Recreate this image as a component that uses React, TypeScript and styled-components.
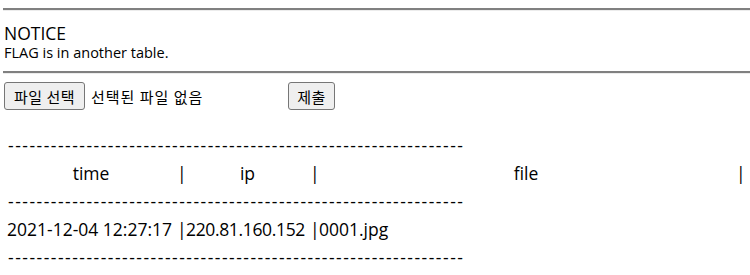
import { Fragment } from "react";
import styled, { createGlobalStyle } from "styled-components";

const GlobalStyle = createGlobalStyle`
  body {
    margin: 0;
    background: #ffffff;
    color: #000000;
    font-family: "Open Sans", "Noto Sans CJK KR", sans-serif;
  }
`;

const Page = styled.div`
  padding: 8px 0 0 3px;
`;

const Rule = styled.hr<{ $top: number }>`
  margin: ${(p) => p.$top}px 0 0 0;
  height: 0;
  border: 0;
  border-top: 2px solid #808080;
  border-bottom: 1px solid #ececec;
`;

const Notice = styled.div`
  padding: 12px 0 0 1px;
`;

const NoticeTitle = styled.div`
  font-size: 17.5px;
  line-height: 21px;
`;

const NoticeText = styled.div`
  font-size: 14.5px;
  line-height: 17px;
`;

const UploadForm = styled.form`
  display: flex;
  align-items: center;
  margin-top: 8px;
  padding-left: 1px;
`;

const FilePicker = styled.label`
  display: flex;
  align-items: center;
  gap: 6px;
  width: 280px;
  font-family: "Noto Sans CJK KR", sans-serif;
  font-size: 15px;
  letter-spacing: 1px;
`;

const Button = styled.button<{ $width: number }>`
  width: ${(p) => p.$width}px;
  height: 28px;
  padding: 0;
  background: #efefef;
  border: 1px solid #767676;
  border-radius: 3px;
  font-family: "Noto Sans CJK KR", sans-serif;
  font-size: 15px;
  letter-spacing: 0.5px;
  color: #000;
`;

const SubmitButton = styled(Button)`
  margin-left: 4px;
`;

const Log = styled.div`
  margin-top: 21px;
  display: grid;
  grid-template-columns: 172px 8px 125px 6px 420px 6px;
  padding-left: 2px;
  font-size: 17.5px;
`;

const Dashes = styled.div`
  grid-column: 1 / -1;
  height: 28px;
  line-height: 28px;
  padding-left: 3px;
  letter-spacing: 1.5px;
  white-space: nowrap;
`;

const Head = styled.div`
  height: 28px;
  line-height: 28px;
  text-align: center;
`;

const Cell = styled.div<{ $pad: number; $tight?: boolean }>`
  height: 28px;
  line-height: 28px;
  padding-left: ${(p) => p.$pad}px;
  letter-spacing: ${(p) => (p.$tight ? "-0.35px" : "0")};
  white-space: nowrap;
`;

const Sep = styled.div`
  height: 28px;
  line-height: 28px;
  text-align: center;
`;

const dashes = "-".repeat(64);

const logs = [{ time: "2021-12-04 12:27:17", ip: "220.81.160.152", file: "0001.jpg" }];

export default function App() {
  return (
    <Page>
      <GlobalStyle />
      <Rule $top={0} />
      <Notice>
        <NoticeTitle>NOTICE</NoticeTitle>
        <NoticeText>FLAG is in another table.</NoticeText>
      </Notice>
      <Rule $top={10} />
      <UploadForm onSubmit={(e) => e.preventDefault()}>
        <FilePicker>
          <Button type="button" $width={81}>
            파일 선택
          </Button>
          <span>선택된 파일 없음</span>
        </FilePicker>
        <SubmitButton type="submit" $width={47}>
          제출
        </SubmitButton>
      </UploadForm>
      <Log>
        <Dashes>{dashes}</Dashes>
        <Head>time</Head>
        <Sep>|</Sep>
        <Head>ip</Head>
        <Sep>|</Sep>
        <Head>file</Head>
        <Sep>|</Sep>
        <Dashes>{dashes}</Dashes>
        {logs.map((row) => (
          <Fragment key={row.time}>
            <Cell $pad={2}>{row.time}</Cell>
            <Sep>|</Sep>
            <Cell $pad={1} $tight>
              {row.ip}
            </Cell>
            <Sep>|</Sep>
            <Cell $pad={3}>{row.file}</Cell>
            <Sep />
            <Dashes>{dashes}</Dashes>
          </Fragment>
        ))}
      </Log>
    </Page>
  );
}
